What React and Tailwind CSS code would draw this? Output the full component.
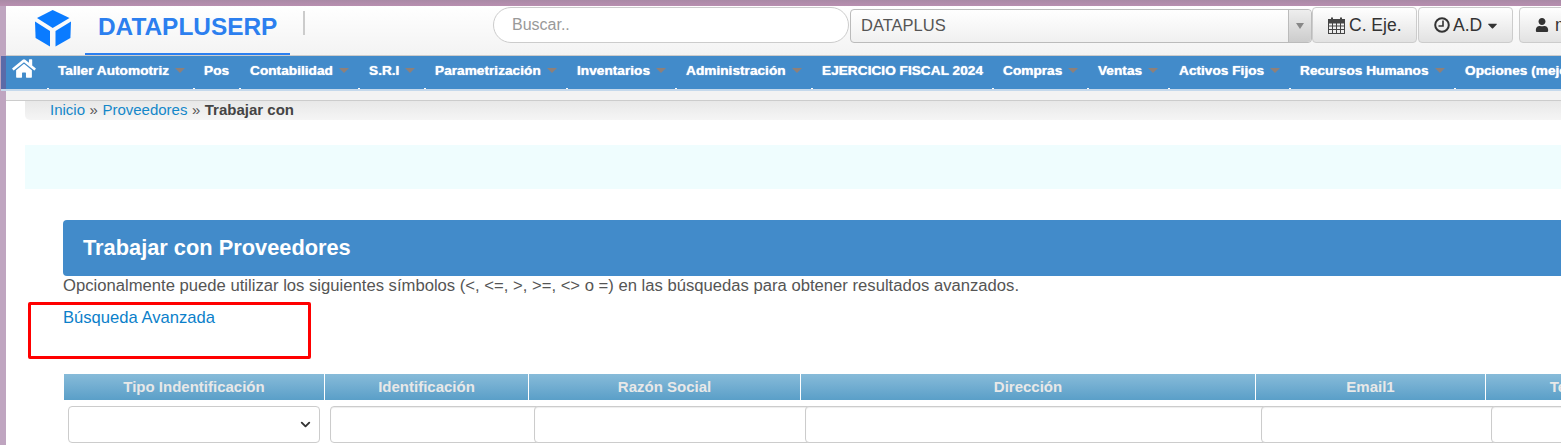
import React from 'react';
import { FaHome, FaUser, FaCaretDown } from 'react-icons/fa';
import { FiChevronDown } from 'react-icons/fi';

const menu = [
  { label: 'Taller Automotriz', width: 'w-[146px]', caret: true },
  { label: 'Pos', width: 'w-[46px]' },
  { label: 'Contabilidad', width: 'w-[119px]', caret: true },
  { label: 'S.R.I', width: 'w-[66px]', caret: true },
  { label: 'Parametrización', width: 'w-[142px]', caret: true },
  { label: 'Inventarios', width: 'w-[109px]', caret: true },
  { label: 'Administración', width: 'w-[136px]', caret: true },
  { label: 'EJERCICIO FISCAL 2024', width: 'w-[181px]' },
  { label: 'Compras', width: 'w-[95px]', caret: true },
  { label: 'Ventas', width: 'w-[81px]', caret: true },
  { label: 'Activos Fijos', width: 'w-[121px]', caret: true },
  { label: 'Recursos Humanos', width: 'w-[165px]', caret: true },
  { label: 'Opciones (mejoras)', width: 'w-[140px]' },
];

const columns = [
  { label: 'Tipo Indentificación', width: 'w-[261px]', select: true },
  { label: 'Identificación', width: 'w-[204px]', inset: 'ml-[5px]' },
  { label: 'Razón Social', width: 'w-[272px]', inset: 'ml-[5px]' },
  { label: 'Dirección', width: 'w-[455px]', inset: 'ml-[4px]' },
  { label: 'Email1', width: 'w-[230px]', inset: 'ml-[5px]' },
  { label: 'Teléfono', width: 'w-[190px]', inset: 'ml-[5px]' },
];

const CubeLogo = () => (
  <svg width="36" height="37" viewBox="0 0 36 37" fill="#0a7bff" className="shrink-0">
    <polygon points="17.7,0 34.5,8 17.7,18 2,8" />
    <polygon points="0,11.6 15,21 15,36.6 0.6,28" />
    <polygon points="36,11.6 20.5,21 20.5,36.6 35.4,28" />
  </svg>
);

const CalendarIcon = () => (
  <svg width="17" height="17" viewBox="0 0 17 17" fill="none" stroke="#444" strokeWidth="1">
    <rect x="0.5" y="2.5" width="16" height="14" />
    <rect x="0.5" y="2.5" width="16" height="3.5" fill="#444" />
    <path d="M0.5 9h16M0.5 12.5h16M4.5 6v10M8.5 6v10M12.5 6v10" />
    <path d="M4 0.5v3.5M13 0.5v3.5" strokeWidth="2" />
  </svg>
);

const ClockIcon = () => (
  <svg width="16" height="16" viewBox="0 0 16 16" fill="none" stroke="#333" strokeWidth="2">
    <circle cx="8" cy="8" r="6.8" />
    <path d="M9 3.5V9H4.5" strokeWidth="1.6" />
  </svg>
);

const ToolButton = ({ width, children }) => (
  <div className={`${width} h-[36px] shrink-0 flex items-center pl-[15px] gap-[4px] rounded-[4px] border border-[#ccc] bg-gradient-to-b from-white to-[#e2e2e2] text-[17.5px] text-[#333]`}>
    {children}
  </div>
);

const App = () => {
  return (
    <div className="w-[1561px] h-[445px] overflow-hidden bg-[#bfa5c0] font-['Liberation_Sans',Arial,sans-serif]">
      <div className="h-[6px] bg-gradient-to-b from-[#a98aa6] to-[#b88fb0]" />

      <div className="ml-[6px] h-[439px] bg-white">
        {/* top header */}
        <div className="h-[50px] flex items-start bg-gradient-to-b from-white to-[#f3f3f3] border-b border-[#ccc]">
          <div className="ml-[29px] mt-[4px]">
            <CubeLogo />
          </div>
          <div className="w-[205px] h-[49px] ml-[14px] shrink-0 border-b-2 border-[#2c7fef] pl-[13px] pt-[3px]">
            <span className="text-[24.4px] leading-[36px] font-bold text-[#2c7fef]">DATAPLUSERP</span>
          </div>
          <div className="w-[2px] h-[24px] mt-[5px] ml-[13px] bg-[#ccc] shrink-0" />
          <div className="w-[356px] h-[36px] mt-[1px] ml-[188px] shrink-0 rounded-full border border-[#ccc] bg-white flex items-center pl-[18px] text-[16px] text-[#999]">
            Buscar..
          </div>
          <div className="w-[462px] h-[34px] mt-[3px] ml-[1px] shrink-0 flex rounded-[4px] border border-[#bbb] bg-gradient-to-b from-white to-[#f0f0f0]">
            <div className="flex-1 pl-[10px] text-[16.5px] leading-[30px] text-[#555]">DATAPLUS</div>
            <div className="w-[23px] flex items-center justify-center border-l border-[#bbb] bg-gradient-to-b from-[#eee] to-[#ccc] rounded-r-[4px]">
              <div className="w-0 h-0 border-x-[4px] border-x-transparent border-t-[6px] border-t-[#888]" />
            </div>
          </div>
          <div className="flex mt-[1px]">
            <ToolButton width="w-[105px]">
              <CalendarIcon />
              <span>C. Eje.</span>
            </ToolButton>
            <div className="ml-[1px]">
              <ToolButton width="w-[95px]">
                <ClockIcon />
                <span className="-ml-[1px]">A.D</span>
                <FaCaretDown className="w-[15px] h-[15px] -ml-[1px]" />
              </ToolButton>
            </div>
            <div className="ml-[6px]">
              <ToolButton width="w-[80px]">
                <FaUser className="w-[14px] h-[14px]" />
                <span className="ml-[2px]">mo</span>
              </ToolButton>
            </div>
          </div>
        </div>

        {/* main menu */}
        <div className="-ml-[5px] h-[35px] flex bg-[#428bca] border-b-2 border-[#c5d9ec]">
          <div className="w-[5px] shrink-0 bg-[#5a6aa8]" />
          <div className="w-[41px] shrink-0 pl-[6px] pt-[2px]">
            <FaHome className="w-[24px] h-[21px] text-white" />
          </div>
          {menu.map((item) => (
            <div key={item.label} className={`${item.width} shrink-0 relative flex items-start pl-[11px] pt-[6px]`}>
              <span className="absolute left-0 bottom-0 w-[2px] h-[1px] bg-white" />
              <span className="text-[13.7px] leading-[18px] font-bold text-white whitespace-nowrap [text-shadow:0_0_1px_#fff]">{item.label}</span>
              {item.caret && (
                <span className="ml-[6px] mt-[6px] w-0 h-0 border-x-[5px] border-x-transparent border-t-[5px] border-t-[#8f8078]" />
              )}
            </div>
          ))}
        </div>

        <div className="h-[10px] bg-[#f3f3f3] border-b border-[#ccc]" />

        {/* breadcrumb */}
        <div className="ml-[19px] h-[19px] pl-[25px] flex items-center gap-[4.5px] rounded-bl-[5px] bg-gradient-to-b from-[#e8e8e8] to-[#f5f5f5] text-[15px] text-[#555]">
          <span className="text-[#1487c9]">Inicio</span>
          <span>»</span>
          <span className="text-[#1487c9]">Proveedores</span>
          <span>»</span>
          <span className="font-bold text-[#444]">Trabajar con</span>
        </div>

        <div className="ml-[19px] mt-[25px] h-[44px] bg-[#effdfe]" />

        <div className="ml-[57px] mt-[31px] relative">
          <div className="h-[56px] flex items-center pl-[20px] rounded-l-[4px] bg-[#428bca] text-[21.8px] font-bold text-white">
            Trabajar con Proveedores
          </div>
          <p className="h-[18px] mt-[1px] text-[16.65px] leading-[18px] text-[#555] whitespace-nowrap">
            Opcionalmente puede utilizar los siguientes símbolos (&lt;, &lt;=, &gt;, &gt;=, &lt;&gt; o =) en las búsquedas para obtener resultados avanzados.
          </p>
          <div className="mt-[14px] h-[18px] text-[16.6px] leading-[18px] text-[#0b7fca]">Búsqueda Avanzada</div>

          {/* red annotation from the screenshot */}
          <div className="absolute left-[-35px] top-[82px] w-[283px] h-[57px] border-[3px] border-[#ff0000] rounded-[2px]" />

          <div className="mt-[47px] ml-[1px] flex">
            {columns.map((col) => (
              <div key={col.label} className={`${col.width} shrink-0`}>
                <div className="mr-[1px] h-[26px] flex items-center justify-center bg-gradient-to-b from-[#87bbd9] to-[#5a9fc8] text-[15px] font-bold text-[#e8e8e8] whitespace-nowrap">
                  {col.label}
                </div>
                {col.select ? (
                  <div className="mt-[6px] ml-[4px] w-[252px] h-[37px] flex items-center justify-end pr-[6px] rounded-[4px] border border-[#ccc] bg-white">
                    <FiChevronDown className="w-[15px] h-[15px] text-[#333]" strokeWidth={3} />
                  </div>
                ) : (
                  <div className={`mt-[6px] ${col.inset} w-[calc(100%+20px)] h-[37px] rounded-[4px] border border-[#ccc] bg-white shadow-[inset_0_1px_1px_rgba(0,0,0,0.075)]`} />
                )}
              </div>
            ))}
          </div>
        </div>
      </div>
    </div>
  );
};

export default App;
